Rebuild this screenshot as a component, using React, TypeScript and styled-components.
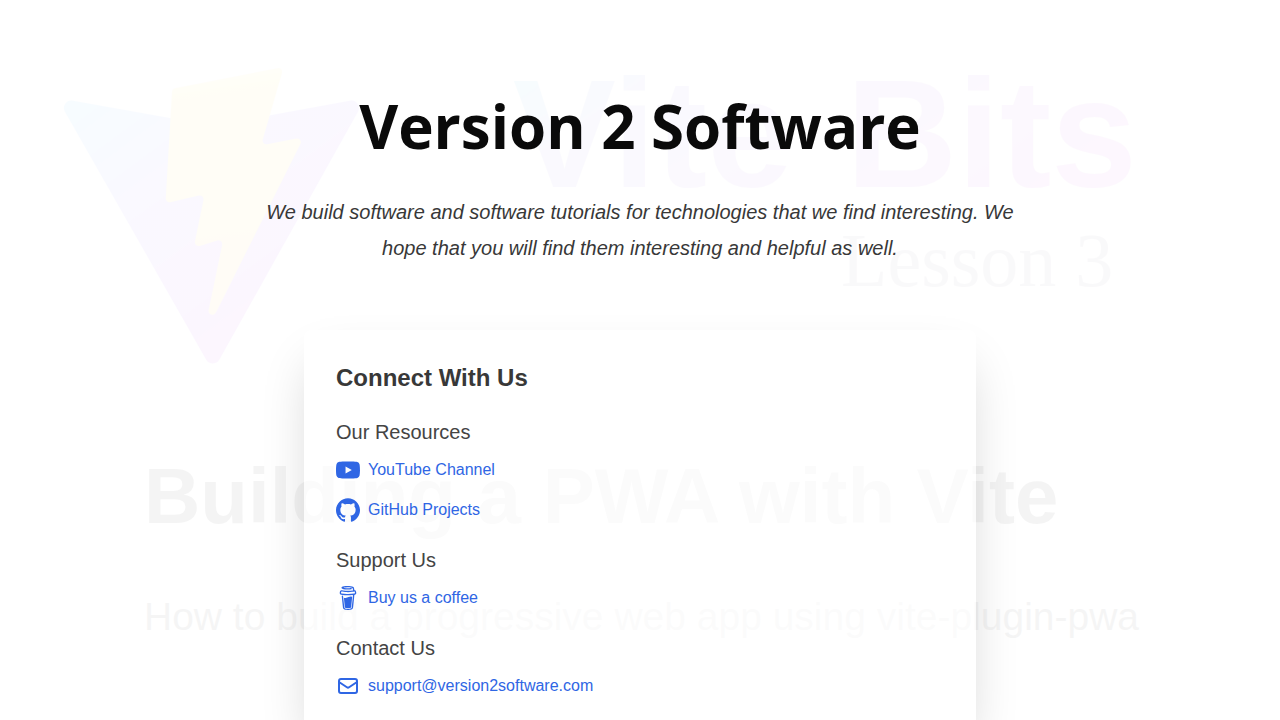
import React from "react";
import styled, { createGlobalStyle } from "styled-components";
import { SiYoutube, SiGithub, SiBuymeacoffee } from "react-icons/si";

const GlobalStyle = createGlobalStyle`
  *, *::before, *::after { box-sizing: border-box; }
  body {
    margin: 0;
    background: #fff;
    color: #383838;
    font-family: "Liberation Sans", Arial, sans-serif;
    font-size: 16px;
    line-height: 24px;
  }
  h1, h2, h3, p, ul { margin: 0; padding: 0; }
`;

const Page = styled.div`
  position: relative;
  min-height: 100vh;
  overflow: hidden;
`;

const Banner = styled.svg`
  position: absolute;
  top: 0;
  left: 0;
  width: 100%;
  height: 100vh;
  opacity: 0.04;
  pointer-events: none;
`;

const Main = styled.main`
  position: relative;
  display: flex;
  flex-direction: column;
  align-items: center;
  gap: 64px;
  padding: 90px 16px 64px;
`;

const Intro = styled.header`
  display: flex;
  flex-direction: column;
  gap: 32px;
  width: 100%;
  max-width: 768px;
  text-align: center;
`;

const Title = styled.h1`
  color: #0a0a0a;
  font-family: "Open Sans", "Noto Sans", sans-serif;
  font-size: 60px;
  font-weight: 700;
  line-height: 72px;
`;

const Tagline = styled.p`
  font-size: 20px;
  font-style: italic;
  line-height: 36px;
`;

const Card = styled.section`
  display: flex;
  flex-direction: column;
  gap: 24px;
  width: 100%;
  max-width: 672px;
  padding: 32px;
  border-radius: 8px;
  background: rgba(255, 255, 255, 0.6);
  box-shadow: 0 25px 50px -12px rgba(0, 0, 0, 0.2);
`;

const CardTitle = styled.h2`
  font-size: 24px;
  font-weight: 700;
  line-height: 32px;
`;

const Group = styled.section`
  display: flex;
  flex-direction: column;
  gap: 12px;
`;

const GroupTitle = styled.h3`
  color: #444;
  font-size: 20px;
  font-weight: 400;
  line-height: 28px;
`;

const LinkList = styled.ul`
  display: flex;
  flex-direction: column;
  align-items: flex-start;
  gap: 16px;
  list-style: none;
`;

const ResourceLink = styled.a`
  display: flex;
  align-items: center;
  gap: 8px;
  color: #2f66e4;
  text-decoration: none;

  svg { flex: none; width: 24px; height: 24px; }
  &:hover { text-decoration: underline; }
`;

function MailIcon() {
  return (
    <svg viewBox="0 0 24 24" fill="none" stroke="currentColor" strokeWidth="2" strokeLinecap="round" strokeLinejoin="round" aria-hidden="true">
      <rect x="3" y="5" width="18" height="14" rx="2" />
      <path d="M3 8l7.89 5.26a2 2 0 0 0 2.22 0L21 8" />
    </svg>
  );
}

const groups = [
  {
    title: "Our Resources",
    links: [
      { label: "YouTube Channel", href: "#youtube", Icon: SiYoutube },
      { label: "GitHub Projects", href: "#github", Icon: SiGithub },
    ],
  },
  {
    title: "Support Us",
    links: [{ label: "Buy us a coffee", href: "#coffee", Icon: SiBuymeacoffee }],
  },
  {
    title: "Contact Us",
    links: [
      { label: "support@version2software.com", href: "mailto:support@version2software.com", Icon: MailIcon },
    ],
  },
];

function LessonBanner() {
  return (
    <Banner viewBox="0 0 1280 720" preserveAspectRatio="xMidYMid slice" aria-hidden="true">
      <defs>
        <linearGradient id="shield" x1="6" y1="33" x2="235" y2="344" gradientUnits="userSpaceOnUse">
          <stop stopColor="#41d1ff" />
          <stop offset="0.4" stopColor="#8a80ff" />
          <stop offset="1" stopColor="#bd34fe" />
        </linearGradient>
        <linearGradient id="bolt" x1="194" y1="9" x2="236" y2="293" gradientUnits="userSpaceOnUse">
          <stop stopColor="#ffea83" />
          <stop offset="0.08" stopColor="#ffe840" />
          <stop offset="1" stopColor="#ffc840" />
        </linearGradient>
        <linearGradient id="heading" x1="512" y1="70" x2="760" y2="420" gradientUnits="userSpaceOnUse">
          <stop stopColor="#41d1ff" />
          <stop offset="0.2" stopColor="#9088f0" />
          <stop offset="1" stopColor="#d850f0" />
        </linearGradient>
      </defs>
      <g transform="translate(57 67) scale(0.753)">
        <path
          fill="url(#shield)"
          d="M399.641 59.5246L215.643 388.545C211.844 395.338 202.084 395.378 198.228 388.618L10.5817 59.5563C6.38087 52.1896 12.6802 43.2665 21.0281 44.7586L205.223 77.6824C206.398 77.8924 207.601 77.8904 208.776 77.6763L389.119 44.8058C397.439 43.2894 403.768 52.1434 399.641 59.5246Z"
        />
        <path
          fill="url(#bolt)"
          d="M292.965 1.5744L156.801 28.2552C154.563 28.6937 152.906 30.5903 152.771 32.8664L144.395 174.33C144.198 177.662 147.258 180.248 150.51 179.498L188.42 170.749C191.967 169.931 195.172 173.055 194.443 176.622L183.18 231.775C182.422 235.487 185.907 238.661 189.532 237.56L212.947 230.446C216.577 229.344 220.065 232.527 219.297 236.242L201.398 322.875C200.278 328.294 207.486 331.249 210.492 326.603L212.5 323.5L323.454 102.072C325.312 98.3645 322.108 94.137 318.036 94.9228L279.014 102.454C275.347 103.161 272.227 99.746 273.262 96.1583L298.731 7.86689C299.767 4.27314 296.636 0.855181 292.965 1.5744Z"
        />
      </g>
      <g fontFamily="Liberation Sans" fontSize="154" fontWeight="700" fill="url(#heading)">
        <text x="513" y="187">Vite</text>
        <text x="846" y="187">Bits</text>
      </g>
      <text x="841" y="286" fontFamily="Liberation Serif" fontSize="76" fill="#8a7a9a">Lesson 3</text>
      <text x="144" y="523" fontFamily="Liberation Sans" fontSize="78" fontWeight="700" fill="#000">Building a PWA with Vite</text>
      <text x="144" y="630" fontFamily="Liberation Sans" fontSize="39" fill="#222">How to build a progressive web app using vite-plugin-pwa</text>
    </Banner>
  );
}

export default function App() {
  return (
    <Page>
      <GlobalStyle />
      <LessonBanner />
      <Main>
        <Intro>
          <Title>Version 2 Software</Title>
          <Tagline>
            We build software and software tutorials for technologies that we find interesting. We hope that you will
            find them interesting and helpful as well.
          </Tagline>
        </Intro>
        <Card>
          <CardTitle>Connect With Us</CardTitle>
          {groups.map(({ title, links }) => (
            <Group key={title}>
              <GroupTitle>{title}</GroupTitle>
              <LinkList>
                {links.map(({ label, href, Icon }) => (
                  <li key={label}>
                    <ResourceLink href={href}>
                      <Icon />
                      {label}
                    </ResourceLink>
                  </li>
                ))}
              </LinkList>
            </Group>
          ))}
        </Card>
      </Main>
    </Page>
  );
}
